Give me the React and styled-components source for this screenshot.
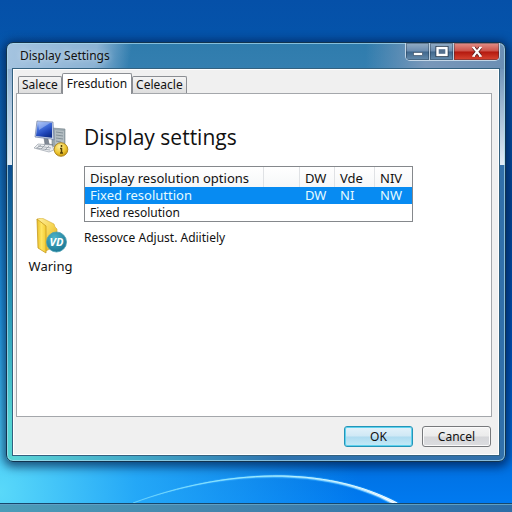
import React, { useState } from 'react';
import styled, { createGlobalStyle } from 'styled-components';

const GlobalStyle = createGlobalStyle`
  * {
    box-sizing: border-box;
  }

  body {
    margin: 0;
    font-family: 'Noto Sans', 'Open Sans', sans-serif;
    font-size: 12px;
    line-height: 16px;
    color: #111;
  }

  button {
    font: inherit;
    color: inherit;
    cursor: pointer;
  }
`;

const Desktop = styled.div`
  position: relative;
  display: flex;
  flex-direction: column;
  min-height: 100vh;
  background:
    radial-gradient(ellipse 70% 90% at 0% 96%, rgba(94, 222, 250, 0.95) 0%, rgba(45, 180, 250, 0.8) 38%, rgba(0, 120, 240, 0) 100%),
    linear-gradient(180deg, #0550a8 0%, #0456ac 12%, #04499a 40%, #0055bb 68%, #0072e4 92%, #007cf4 100%);
`;

const Wallpaper = styled.svg`
  position: absolute;
  inset: 0;
  width: 100%;
  height: 100%;
`;

const Workspace = styled.main`
  position: relative;
  flex: 1;
  display: flex;
  padding: 42px 6px 41px;
`;

const Taskbar = styled.footer`
  position: relative;
  height: 9px;
  border-top: 1px solid #17486c;
  background: linear-gradient(90deg, #4b9db9 0%, #4586ad 40%, #2c6da7 100%);
  box-shadow: inset 0 1px 0 #5d9fc4;
`;

const Window = styled.section`
  flex: 1;
  display: flex;
  flex-direction: column;
  padding: 0 5px 5px;
  border: 1px solid #12344f;
  border-radius: 7px;
  background:
    linear-gradient(100deg, #a5c4e0 0%, #8cb3d4 18%, rgba(47, 124, 173, 0) 25%) 0 0 / 100% 26px no-repeat,
    linear-gradient(90deg, rgba(120, 155, 190, 0) 72%, #7897b9 84%, #6c8fb4 100%) 0 0 / 100% 26px no-repeat,
    linear-gradient(180deg, #8fb1d2 0%, #e2edf6 100%) 0 26px / 6px 96px no-repeat,
    linear-gradient(180deg, #7295b9 0%, #e2edf6 100%) 100% 26px / 6px 96px no-repeat,
    linear-gradient(180deg, #0b4f91 30%, #2792b4 60%, #55d4d3 90%) 0 0 / 6px 100% no-repeat,
    linear-gradient(180deg, #2f7cad 0, #347fb0 26px, rgba(0, 0, 0, 0) 26px),
    linear-gradient(90deg, #5bd5d8 0%, #43aac8 25%, #2d72ae 55%, #3270aa 100%);
  box-shadow:
    inset 0 0 0 1px rgba(170, 220, 240, 0.7),
    0 2px 10px 3px rgba(0, 20, 60, 0.65);
`;

const TitleBar = styled.header`
  display: flex;
  justify-content: space-between;
  align-items: flex-start;
  height: 25px;
  padding-left: 8px;
`;

const WindowTitle = styled.span`
  padding-top: 5px;
  text-shadow: 0 0 6px rgba(255, 255, 255, 0.7);
`;

const Controls = styled.div`
  display: flex;
  height: 18px;
  border: 1px solid #c2d5e6;
  border-top: none;
  border-radius: 0 0 5px 5px;
  overflow: hidden;
`;

const ControlButton = styled.button`
  display: flex;
  align-items: center;
  justify-content: center;
  width: ${props => (props.$wide ? '45px' : '24px')};
  padding: 0;
  border: none;
  border-right: ${props => (props.$wide ? 'none' : '1px solid #bdd0e0')};
  background: ${props => (props.$wide
    ? 'linear-gradient(180deg, #e39088 0%, #cc5148 48%, #b3180e 52%, #d84632 100%)'
    : 'linear-gradient(180deg, #93adc5 0%, #6b8caf 48%, #3f678d 52%, #668cad 100%)')};
  box-shadow: inset 0 0 0 1px rgba(20, 40, 60, 0.35);
`;

const Body = styled.div`
  flex: 1;
  display: flex;
  flex-direction: column;
  padding: 4px 7px 0 3px;
  border: 1px solid #34617f;
  background: #f0f0f0;
  box-shadow: inset 0 0 0 1px #fff;
`;

const TabList = styled.div`
  display: flex;
  align-items: flex-end;
  height: 20px;
  padding-left: 2px;
`;

const Tab = styled.button`
  height: ${props => (props.$active ? '21px' : '17px')};
  margin-bottom: ${props => (props.$active ? '-1px' : '0')};
  padding: ${props => (props.$active ? '0 4px' : '0 3px')};
  border: 1px solid #8b8e93;
  border-bottom: none;
  border-radius: 2px 2px 0 0;
  background: ${props => (props.$active ? '#fff' : 'linear-gradient(180deg, #f4f4f4 0%, #dedede 100%)')};
  line-height: 16px;
  z-index: ${props => (props.$active ? 1 : 0)};
`;

const Panel = styled.div`
  flex: 1;
  display: flex;
  border: 1px solid #a4a7ab;
  background: #fff;
`;

const Sidebar = styled.div`
  display: flex;
  flex-direction: column;
  align-items: center;
  gap: 60px;
  width: 67px;
  padding-top: 26px;
`;

const SidebarItem = styled.div`
  display: flex;
  flex-direction: column;
  align-items: center;
  gap: 4px;
  font-size: 13px;
  line-height: 16px;
`;

const Content = styled.div`
  flex: 1;
  padding-top: 28px;
`;

const Heading = styled.h1`
  margin: 0 0 14px;
  font-family: 'Open Sans', 'Noto Sans', sans-serif;
  font-size: 21px;
  font-weight: 400;
  line-height: 30px;
`;

const OptionsTable = styled.table`
  width: 329px;
  max-width: 100%;
  border: 1px solid #85888c;
  border-collapse: separate;
  border-spacing: 0;
  table-layout: fixed;
`;

const HeadCell = styled.th`
  width: ${props => props.$width || 'auto'};
  height: 20px;
  padding: 2px 0 0 5px;
  border-right: 1px solid #e0e2e5;
  background: linear-gradient(180deg, #fff 0%, #f6f7f8 100%);
  font-size: 13px;
  font-weight: 400;
  text-align: left;
  white-space: nowrap;

  &:last-child {
    border-right: none;
  }
`;

const Row = styled.tr`
  background: ${props => (props.$selected ? '#078bf2' : '#fff')};
  color: ${props => (props.$selected ? '#e6fbff' : '#111')};
  font-size: ${props => (props.$selected ? '13px' : '12px')};
  cursor: default;
`;

const Cell = styled.td`
  height: 17px;
  padding: 0 0 0 5px;
  line-height: 17px;
  white-space: nowrap;
`;

const Note = styled.p`
  margin: 8px 0 0;
  line-height: 16px;
`;

const Actions = styled.div`
  display: flex;
  justify-content: flex-end;
  gap: 9px;
  padding: 9px 1px 8px;
`;

const ActionButton = styled.button`
  width: 69px;
  height: 21px;
  padding: 0;
  border: 1px solid ${props => (props.$primary ? '#2494b8' : '#77797c')};
  border-radius: 3px;
  background: ${props => (props.$primary
    ? 'linear-gradient(180deg, #e3f2fa 0%, #cfe8f5 48%, #aedbf0 52%, #c4eaf7 100%)'
    : 'linear-gradient(180deg, #f4f4f4 0%, #ebebeb 48%, #d5d6d9 52%, #dcdde0 100%)')};
  box-shadow: inset 0 0 0 1px ${props => (props.$primary ? '#5ed2ee' : '#fafafa')};
  line-height: 16px;
`;

function MinimizeIcon() {
  return (
    <svg width="12" height="12" viewBox="0 0 12 12" aria-hidden="true">
      <rect x="1.5" y="6.5" width="9" height="3" fill="#fff" stroke="#44566b" strokeWidth="0.7" />
    </svg>
  );
}

function MaximizeIcon() {
  return (
    <svg width="14" height="14" viewBox="0 0 14 14" aria-hidden="true">
      <rect x="2.5" y="3" width="9" height="7" fill="none" stroke="#26394d" strokeWidth="4" />
      <rect x="2.5" y="3" width="9" height="7" fill="#55718f" stroke="#fff" strokeWidth="2.4" />
    </svg>
  );
}

function CloseIcon() {
  return (
    <svg width="14" height="12" viewBox="0 0 14 12" aria-hidden="true">
      <path d="M3.5 1.5 10.5 10M10.5 1.5 3.5 10" stroke="#5d2323" strokeWidth="3.6" />
      <path d="M3.5 1.5 10.5 10M10.5 1.5 3.5 10" stroke="#fff" strokeWidth="2" />
      <path d="M2.2 1.4h2.8M9 1.4h2.8M2.2 10.2h2.8M9 10.2h2.8" stroke="#fff" strokeWidth="1.2" />
    </svg>
  );
}

function ComputerIcon() {
  return (
    <svg width="36" height="38" viewBox="0 0 36 38" aria-hidden="true">
      <defs>
        <linearGradient id="screen" x1="0.1" y1="0" x2="0.6" y2="1">
          <stop offset="0" stopColor="#9db9f3" />
          <stop offset="0.4" stopColor="#4470dc" />
          <stop offset="0.75" stopColor="#1f45b8" />
          <stop offset="1" stopColor="#10308f" />
        </linearGradient>
        <radialGradient id="coin" cx="0.4" cy="0.3" r="0.8">
          <stop offset="0" stopColor="#fff1a0" />
          <stop offset="0.6" stopColor="#ecc32b" />
          <stop offset="1" stopColor="#b98708" />
        </radialGradient>
      </defs>
      <path d="m19 8 13 1v19l-3 1-10-3z" fill="#9aa7ae" stroke="#77848c" strokeWidth="0.6" />
      <path d="m22 10 9 1v15l-9-2z" fill="#b3bdc2" />
      <path d="m23 12 7 1M23 15l7 1M23 18l7 1M23 21l5 1" stroke="#75848d" strokeWidth="0.8" />
      <path d="m11 18 4 1 1 5 4 1-3 2-8-1 3-2z" fill="#7f8894" stroke="#666f7b" strokeWidth="0.6" />
      <path d="m4 1 16 1 1 18-3-1L2 17z" fill="#c5d0e4" stroke="#6c7da5" strokeWidth="0.7" />
      <path d="m4.7 1.8 14.3 1v15L3 16z" fill="url(#screen)" />
      <path d="m5 2 12 1-11 7z" fill="#c4d5fb" opacity="0.45" />
      <path d="m5 24 14 1 2 5-5 2-15-4z" fill="#eceef0" stroke="#8d959f" strokeWidth="0.6" />
      <path d="m5 26 13 2M3 28l14 2M8 25l-4 3M12 25l-4 4M16 26l-4 4" stroke="#8d959f" strokeWidth="0.7" />
      <circle cx="28" cy="29.5" r="6.8" fill="url(#coin)" stroke="#a87f16" strokeWidth="0.9" />
      <path d="M28.5 25v2M27 28.5h1.5V33M27 33h3" fill="none" stroke="#584408" strokeWidth="1.5" />
    </svg>
  );
}

const BadgeText = styled.text`
  font: italic 700 11px 'Noto Sans', sans-serif;
  fill: #fff;
`;

function FolderIcon() {
  return (
    <svg width="36" height="36" viewBox="0 0 36 36" aria-hidden="true">
      <defs>
        <linearGradient id="folder" x1="0" y1="0" x2="1" y2="0">
          <stop offset="0" stopColor="#e8bf28" />
          <stop offset="0.5" stopColor="#ffe563" />
          <stop offset="1" stopColor="#f3cc33" />
        </linearGradient>
        <linearGradient id="folderBack" x1="0" y1="0" x2="1" y2="1">
          <stop offset="0" stopColor="#fff0a0" />
          <stop offset="0.5" stopColor="#f6d552" />
          <stop offset="1" stopColor="#d7a51f" />
        </linearGradient>
        <radialGradient id="badge" cx="0.4" cy="0.3" r="0.8">
          <stop offset="0" stopColor="#4eb5ca" />
          <stop offset="1" stopColor="#14708f" />
        </radialGradient>
      </defs>
      <path d="m5 1 5-1 12 6 1 3 2 2v16l-11 6z" fill="url(#folderBack)" stroke="#d2a934" strokeWidth="0.6" />
      <path d="m5 1 9 7v27l-8-5z" fill="url(#folder)" stroke="#c69a1f" strokeWidth="0.8" />
      <circle cx="24.5" cy="24" r="10" fill="url(#badge)" stroke="#4aa0b4" strokeWidth="0.8" />
      <BadgeText x="24.5" y="28" textAnchor="middle">VD</BadgeText>
    </svg>
  );
}

const tabs = ['Salece', 'Fresdution', 'Celeacle'];

const rows = [
  { name: 'Fixed resoluttion', values: ['DW', 'NI', 'NW'] },
  { name: 'Fixed resolution', values: ['', '', ''] }
];

function App() {
  const [activeTab, setActiveTab] = useState(1);
  const [selectedRow, setSelectedRow] = useState(0);

  return (
    <>
      <GlobalStyle />
      <Desktop>
        <Wallpaper viewBox="0 0 512 512" preserveAspectRatio="xMidYMax slice" aria-hidden="true">
          <defs>
            <linearGradient id="arc" x1="0" y1="0" x2="1" y2="0">
              <stop offset="0" stopColor="#5fd0fa" />
              <stop offset="0.5" stopColor="#a5f0ff" />
              <stop offset="1" stopColor="#fff" />
            </linearGradient>
          </defs>
          <path d="M133 503C225 468 325 464 400 504L392 504C325 467 225 470 133 503Z" fill="url(#arc)" stroke="#2fa8ff" strokeOpacity="0.5" strokeWidth="2" />
          <path d="M133 503C225 469 325 465 397 503" fill="none" stroke="url(#arc)" strokeWidth="1" />
        </Wallpaper>

        <Workspace>
          <Window>
            <TitleBar>
              <WindowTitle>Display Settings</WindowTitle>
              <Controls>
                <ControlButton aria-label="Minimize"><MinimizeIcon /></ControlButton>
                <ControlButton aria-label="Maximize"><MaximizeIcon /></ControlButton>
                <ControlButton $wide aria-label="Close"><CloseIcon /></ControlButton>
              </Controls>
            </TitleBar>

            <Body>
              <TabList role="tablist">
                {tabs.map((tab, index) => (
                  <Tab
                    key={tab}
                    role="tab"
                    aria-selected={index === activeTab}
                    $active={index === activeTab}
                    onClick={() => setActiveTab(index)}
                  >
                    {tab}
                  </Tab>
                ))}
              </TabList>

              <Panel role="tabpanel">
                <Sidebar>
                  <ComputerIcon />
                  <SidebarItem>
                    <FolderIcon />
                    Waring
                  </SidebarItem>
                </Sidebar>

                <Content>
                  <Heading>Display settings</Heading>
                  <OptionsTable>
                    <thead>
                      <tr>
                        <HeadCell $width="179px">Display resolution options</HeadCell>
                        <HeadCell $width="36px" />
                        <HeadCell $width="35px">DW</HeadCell>
                        <HeadCell $width="40px">Vde</HeadCell>
                        <HeadCell>NIV</HeadCell>
                      </tr>
                    </thead>
                    <tbody>
                      {rows.map((row, index) => (
                        <Row
                          key={row.name}
                          $selected={index === selectedRow}
                          onClick={() => setSelectedRow(index)}
                        >
                          <Cell colSpan={2}>{row.name}</Cell>
                          {row.values.map((value, i) => (
                            <Cell key={i}>{value}</Cell>
                          ))}
                        </Row>
                      ))}
                    </tbody>
                  </OptionsTable>
                  <Note>Ressovce Adjust. Adiitiely</Note>
                </Content>
              </Panel>

              <Actions>
                <ActionButton $primary>OK</ActionButton>
                <ActionButton>Cancel</ActionButton>
              </Actions>
            </Body>
          </Window>
        </Workspace>
        <Taskbar />
      </Desktop>
    </>
  );
}

export default App;
